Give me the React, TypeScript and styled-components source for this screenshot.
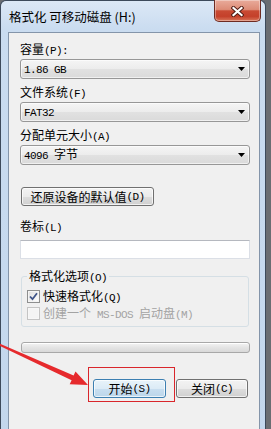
import React from 'react';
import styled, { createGlobalStyle } from 'styled-components';

const GlobalStyle = createGlobalStyle`
  html, body {
    margin: 0;
    padding: 0;
  }
  body {
    width: 271px;
    height: 429px;
    overflow: hidden;
    background: #6a6d72;
    font-family: "Noto Sans CJK SC", sans-serif;
    font-size: 12px;
    color: #000;
  }
`;

const Screen = styled.div`
  position: relative;
  width: 271px;
  height: 429px;
  overflow: hidden;
`;

const Window = styled.div`
  width: 266px;
  height: 440px;
  box-sizing: border-box;
  border: 1px solid #3d4a5b;
  border-bottom: none;
  border-radius: 6px 6px 0 0;
  background: linear-gradient(180deg, #dce8f6 0px, #cadcf0 28px, #c3d7ed 100%);
  padding: 0 5px 0 7px;
  display: flex;
  flex-direction: column;
`;

const TitleBar = styled.div`
  height: 31px;
  display: flex;
  justify-content: space-between;
  align-items: flex-start;
`;

const Title = styled.div`
  padding: 8px 0 0 1px;
  font-size: 12.5px;
  line-height: 16px;
  color: #000;
  white-space: nowrap;
`;

const CloseButton = styled.div`
  width: 47px;
  height: 22px;
  margin: -1px -1px 0 0;
  box-sizing: border-box;
  border: 1px solid #6e2b22;
  border-top: none;
  border-radius: 0 0 5px 5px;
  background: linear-gradient(180deg, #e9ab9b 0%, #dd8c77 45%, #c94a33 52%, #c4402a 78%, #d8765a 100%);
  box-shadow: inset 0 0 0 1px rgba(255, 255, 255, 0.35);
  display: flex;
  align-items: center;
  justify-content: center;
  padding-top: 2px;
`;

const Client = styled.div`
  flex: 1;
  background: #f0f0f0;
  border: 1px solid #8495aa;
  padding: 9px 9px 0 11px;
  display: flex;
  flex-direction: column;
`;

const Latin = styled.span`
  font-family: "Liberation Mono", monospace;
  font-size: 11px;
  letter-spacing: -0.6px;
`;

const Label = styled.div<{ $mt?: number }>`
  height: 14px;
  line-height: 14px;
  margin-top: ${(p) => p.$mt ?? 0}px;
  white-space: nowrap;
`;

const Select = styled.div<{ $mt?: number }>`
  height: 20px;
  margin-top: ${(p) => p.$mt ?? 0}px;
  box-sizing: border-box;
  border: 1px solid #979797;
  border-radius: 3px;
  background: linear-gradient(180deg, #f5f5f5 0%, #ececec 50%, #e1e1e1 52%, #dadada 100%);
  box-shadow: inset 0 0 0 1px rgba(255, 255, 255, 0.6);
  display: flex;
  align-items: center;
  justify-content: space-between;
  padding: 0 4px 0 3px;
  line-height: 14px;
`;

const PushButton = styled.div<{ $w: number; $mt?: number; $ml?: number; $default?: boolean }>`
  width: ${(p) => p.$w}px;
  height: 19px;
  margin-top: ${(p) => p.$mt ?? 0}px;
  margin-left: ${(p) => p.$ml ?? 0}px;
  box-sizing: border-box;
  border: 1px solid ${(p) => (p.$default ? '#3c7fb1' : '#707070')};
  border-radius: 3px;
  background: ${(p) =>
    p.$default
      ? 'linear-gradient(180deg, #e8f3fa 0%, #dcebf6 50%, #c8def0 52%, #bcd6ea 100%)'
      : 'linear-gradient(180deg, #f3f3f3 0%, #ebebeb 50%, #dddddd 52%, #d0d0d0 100%)'};
  box-shadow: inset 0 0 0 1px rgba(255, 255, 255, 0.7);
  display: flex;
  align-items: center;
  justify-content: center;
  line-height: 14px;
  white-space: nowrap;
`;

const TextInput = styled.div<{ $mt?: number }>`
  height: 19px;
  margin-top: ${(p) => p.$mt ?? 0}px;
  box-sizing: border-box;
  background: #fff;
  border: 1px solid #dbdfe6;
  border-top-color: #b5b8bf;
`;

const Group = styled.fieldset`
  margin: 10px 1px 0 1px;
  min-width: 0;
  padding: 5px 5px 4px 5px;
  border: 1px solid #d5dfe5;
  border-radius: 3px;
`;

const Legend = styled.legend`
  padding: 0 2px;
  height: 14px;
  line-height: 14px;
`;

const CheckRow = styled.div<{ $disabled?: boolean }>`
  height: 17px;
  display: flex;
  align-items: center;
  gap: 3px;
  color: ${(p) => (p.$disabled ? '#a3a3a3' : '#000')};
  white-space: nowrap;
  line-height: 14px;
`;

const Box = styled.div<{ $disabled?: boolean }>`
  width: 13px;
  height: 13px;
  box-sizing: border-box;
  border: 1px solid ${(p) => (p.$disabled ? '#c4c4c4' : '#8e8f8f')};
  background: ${(p) =>
    p.$disabled ? '#f4f4f4' : 'linear-gradient(135deg, #dcdcdc 0%, #f2f2f2 60%, #ffffff 100%)'};
  box-shadow: inset 0 0 0 1px ${(p) => (p.$disabled ? '#f7f7f7' : '#f4f4f4')};
  display: flex;
  align-items: center;
  justify-content: center;
`;

const Progress = styled.div`
  height: 11px;
  margin: 15px 0 0 1px;
  box-sizing: border-box;
  border: 1px solid #a8a8a8;
  border-radius: 3px;
  background: linear-gradient(180deg, #f4f4f4 0%, #e4e4e4 50%, #d9d9d9 100%);
  box-shadow: inset 0 1px 0 #ffffff;
`;

const ButtonRow = styled.div`
  margin-top: 26px;
  padding-right: 2px;
  display: flex;
  justify-content: flex-end;
  gap: 10px;
`;

const ButtonSlot = styled.div`
  position: relative;
`;

const Highlight = styled.div`
  position: absolute;
  top: -12px;
  left: -5px;
  right: -9px;
  bottom: -4px;
  border: 1px solid #d9262b;
  pointer-events: none;
`;

const Annotation = styled.svg`
  position: absolute;
  left: 0;
  top: 0;
  pointer-events: none;
`;

const Text = ({ children }: { children: string }) => (
  <>
    {children
      .split(/([\x20-\x7e]+)/)
      .filter(Boolean)
      .map((part, i) => (/^[\x20-\x7e]+$/.test(part) ? <Latin key={i}>{part}</Latin> : part))}
  </>
);

const DropArrow = () => (
  <svg width="7" height="4" viewBox="0 0 7 4">
    <polygon points="0,0 7,0 3.5,4" fill="#000" />
  </svg>
);

const Combo = ({ value, mt }: { value: string; mt?: number }) => (
  <Select $mt={mt}>
    <span>
      <Text>{value}</Text>
    </span>
    <DropArrow />
  </Select>
);

export default function App() {
  return (
    <>
      <GlobalStyle />
      <Screen>
        <Window>
          <TitleBar>
            <Title>格式化 可移动磁盘 (H:)</Title>
            <CloseButton>
              <svg width="13" height="11" viewBox="0 0 13 11">
                <path d="M2.5 2 L10.5 9 M10.5 2 L2.5 9" stroke="#4e1a12" strokeWidth="4" strokeLinecap="square" />
                <path d="M2.5 2 L10.5 9 M10.5 2 L2.5 9" stroke="#fff" strokeWidth="2.2" strokeLinecap="square" />
              </svg>
            </CloseButton>
          </TitleBar>
          <Client>
            <Label>
              <Text>容量(P):</Text>
            </Label>
            <Combo value="1.86 GB" mt={3} />
            <Label $mt={6}>
              <Text>文件系统(F)</Text>
            </Label>
            <Combo value="FAT32" mt={3} />
            <Label $mt={6}>
              <Text>分配单元大小(A)</Text>
            </Label>
            <Combo value="4096 字节" mt={3} />
            <PushButton $w={133} $mt={22} $ml={1}>
              <Text>还原设备的默认值(D)</Text>
            </PushButton>
            <Label $mt={13}>
              <Text>卷标(L)</Text>
            </Label>
            <TextInput $mt={7} />
            <Group>
              <Legend>
                <Text>格式化选项(O)</Text>
              </Legend>
              <CheckRow>
                <Box>
                  <svg width="9" height="9" viewBox="0 0 9 9">
                    <path d="M1 4.5 L3.5 7.2 L8 1.2" fill="none" stroke="#3f5488" strokeWidth="1.8" />
                  </svg>
                </Box>
                <span>
                  <Text>快速格式化(Q)</Text>
                </span>
              </CheckRow>
              <CheckRow $disabled>
                <Box $disabled />
                <span>
                  <Text>创建一个 MS-DOS 启动盘(M)</Text>
                </span>
              </CheckRow>
            </Group>
            <Progress />
            <ButtonRow>
              <ButtonSlot>
                <PushButton $w={73} $default>
                  <Text>开始(S)</Text>
                </PushButton>
                <Highlight />
              </ButtonSlot>
              <PushButton $w={72}>
                <Text>关闭(C)</Text>
              </PushButton>
            </ButtonRow>
          </Client>
        </Window>
        <Annotation width="271" height="429" viewBox="0 0 271 429">
          <polygon
            points="-1.6,343.1 73.6,375.6 75.5,371.5 88,385 69.7,384.3 71.6,380.2 -2.4,344.9"
            fill="#e62a2d"
          />
        </Annotation>
      </Screen>
    </>
  );
}
